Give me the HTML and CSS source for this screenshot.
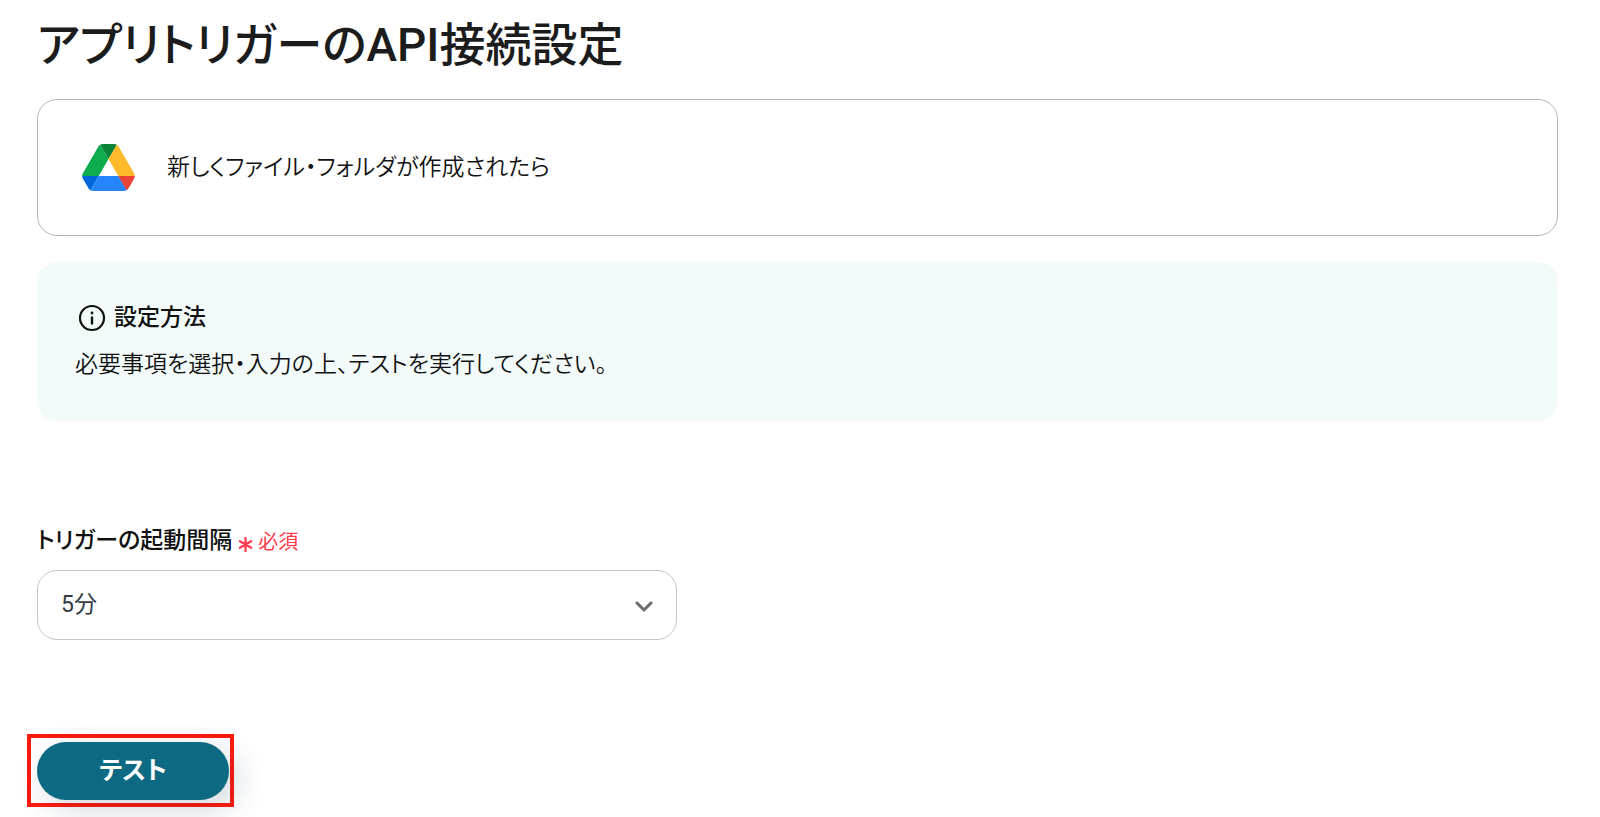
FILE: index.html
```html
<!DOCTYPE html>
<html lang="ja">
<head>
    <meta charset="UTF-8">
    <meta name="viewport" content="width=device-width, initial-scale=1.0">
    <title>アプリトリガーのAPI接続設定</title>
    <link rel="stylesheet" href="styles.css">
</head>
<body>
    <main class="page">
        <h1 class="title">アプリトリガーのAPI接続設定</h1>

        <section class="trigger-card">
            <svg class="trigger-logo" viewBox="0 0 87.3 78" aria-hidden="true">
                <path d="m6.6 66.85 3.85 6.65c.8 1.4 1.95 2.5 3.3 3.3l13.75-23.8h-27.5c0 1.55.4 3.1 1.2 4.5z" fill="#0066da"/>
                <path d="m43.65 25-13.75-23.8c-1.35.8-2.5 1.9-3.3 3.3l-25.4 44a9.06 9.06 0 0 0 -1.2 4.5h27.5z" fill="#0dac4f"/>
                <path d="m73.55 76.8c1.35-.8 2.5-1.9 3.3-3.3l1.6-2.75 7.65-13.25c.8-1.4 1.2-2.95 1.2-4.5h-27.502l5.852 11.5z" fill="#ea4335"/>
                <path d="m43.65 25 13.75-23.8c-1.35-.8-2.9-1.2-4.5-1.2h-18.5c-1.6 0-3.15.45-4.5 1.2z" fill="#0a8436"/>
                <path d="m59.8 53h-32.3l-13.75 23.8c1.35.8 2.9 1.2 4.5 1.2h50.8c1.6 0 3.15-.45 4.5-1.2z" fill="#2684fc"/>
                <path d="m73.4 26.5-12.7-22c-.8-1.4-1.95-2.5-3.3-3.3l-13.75 23.8 16.15 28h27.45c0-1.55-.4-3.1-1.2-4.5z" fill="#ffba2c"/>
            </svg>
            <p class="trigger-name">新しくファイル・フォルダが作成されたら</p>
        </section>

        <section class="guide">
            <h2 class="guide-title">
                <svg class="guide-icon" viewBox="0 0 28 28" aria-hidden="true">
                    <circle cx="14" cy="14" r="12" fill="none" stroke="currentColor" stroke-width="2.2"/>
                    <circle cx="14" cy="9" r="1.4" fill="currentColor"/>
                    <path d="M14 13.5v6" fill="none" stroke="currentColor" stroke-width="2.4" stroke-linecap="round"/>
                </svg>
                設定方法
            </h2>
            <p class="guide-text">必要事項を選択・入力の上、テストを実行してください。</p>
        </section>

        <form class="settings">
            <div class="field-head">
                <label class="field-label" for="interval">トリガーの起動間隔</label>
                <span class="required">
                    <svg class="required-mark" viewBox="0 0 16 16" aria-hidden="true">
                        <path d="M8 1v14M2 4.5l12 7M14 4.5l-12 7" fill="none" stroke="currentColor" stroke-width="2.4" stroke-linecap="round"/>
                    </svg>
                    必須
                </span>
            </div>
            <div class="select-box">
                <select class="select" id="interval" name="interval">
                    <option selected>5分</option>
                </select>
                <svg class="select-arrow" viewBox="0 0 18 12" aria-hidden="true">
                    <path d="M2 2l7 7 7-7" fill="none" stroke="currentColor" stroke-width="3" stroke-linecap="round" stroke-linejoin="round"/>
                </svg>
            </div>

            <div class="highlight">
                <button class="test-button" type="button">テスト</button>
            </div>
        </form>
    </main>
</body>
</html>
```

FILE: styles.css
```css
* {
    box-sizing: border-box;
}

body {
    margin: 0;
    background: #fff;
    color: #111;
    font-family: Roboto, "Noto Sans CJK JP", sans-serif;
    font-size: 23px;
    font-weight: 350;
    line-height: 32px;
    font-feature-settings: "palt";
}

h1, h2, p {
    margin: 0;
}

.page {
    padding: 15px 42px 10px 37px;
}

.title {
    font-size: 46px;
    line-height: 60px;
    font-weight: 500;
    color: #1c1c1c;
}

/* トリガー */
.trigger-card {
    display: flex;
    align-items: center;
    gap: 32px;
    margin-top: 24px;
    padding: 44px;
    border: 1px solid #b5b5b5;
    border-radius: 20px;
}

.trigger-logo {
    width: 53px;
    height: 47px;
}

/* 設定方法 */
.guide {
    margin-top: 26px;
    padding: 40px 38px;
    border-radius: 20px;
    background: #f2fbfa;
}

.guide-title {
    display: flex;
    align-items: center;
    gap: 8px;
    padding-left: 3px;
    font-size: 23px;
    line-height: 32px;
    font-weight: 500;
}

.guide-icon {
    width: 28px;
    height: 28px;
}

.guide-text {
    margin-top: 15px;
}

/* 起動間隔 */
.settings {
    margin-top: 104px;
}

.field-head {
    display: flex;
    align-items: center;
    gap: 6px;
}

.field-label {
    font-weight: 500;
}

.required {
    display: flex;
    align-items: center;
    gap: 5px;
    padding-top: 2px;
    color: #ff3b4e;
    font-size: 20px;
    line-height: 30px;
    font-weight: 400;
}

.required-mark {
    width: 15px;
    height: 15px;
    margin-top: 4px;
}

.select-box {
    position: relative;
    max-width: 640px;
    margin-top: 13px;
}

.select {
    display: block;
    width: 100%;
    height: 70px;
    padding: 0 60px 0 23px;
    border: 1px solid #c0c8d0;
    border-radius: 20px;
    background: #fff;
    color: #333b47;
    font: inherit;
    font-weight: 400;
    font-feature-settings: inherit;
    appearance: none;
}

.select-arrow {
    position: absolute;
    top: 31px;
    right: 24px;
    width: 18px;
    height: 12px;
    color: #6b6b6b;
    pointer-events: none;
}

/* テスト */
.highlight {
    width: fit-content;
    margin: 94px 0 0 -10px;
    padding: 4px 1px 3px 6px;
    border: 4px solid #ff1a0d;
}

.test-button {
    display: block;
    width: 192px;
    height: 58px;
    border: none;
    border-radius: 29px;
    background: #0e6982;
    box-shadow: 8px 8px 32px rgba(20, 50, 80, 0.2);
    color: #fff;
    font: inherit;
    font-size: 25px;
    font-weight: 700;
    font-feature-settings: inherit;
    cursor: pointer;
}
```
